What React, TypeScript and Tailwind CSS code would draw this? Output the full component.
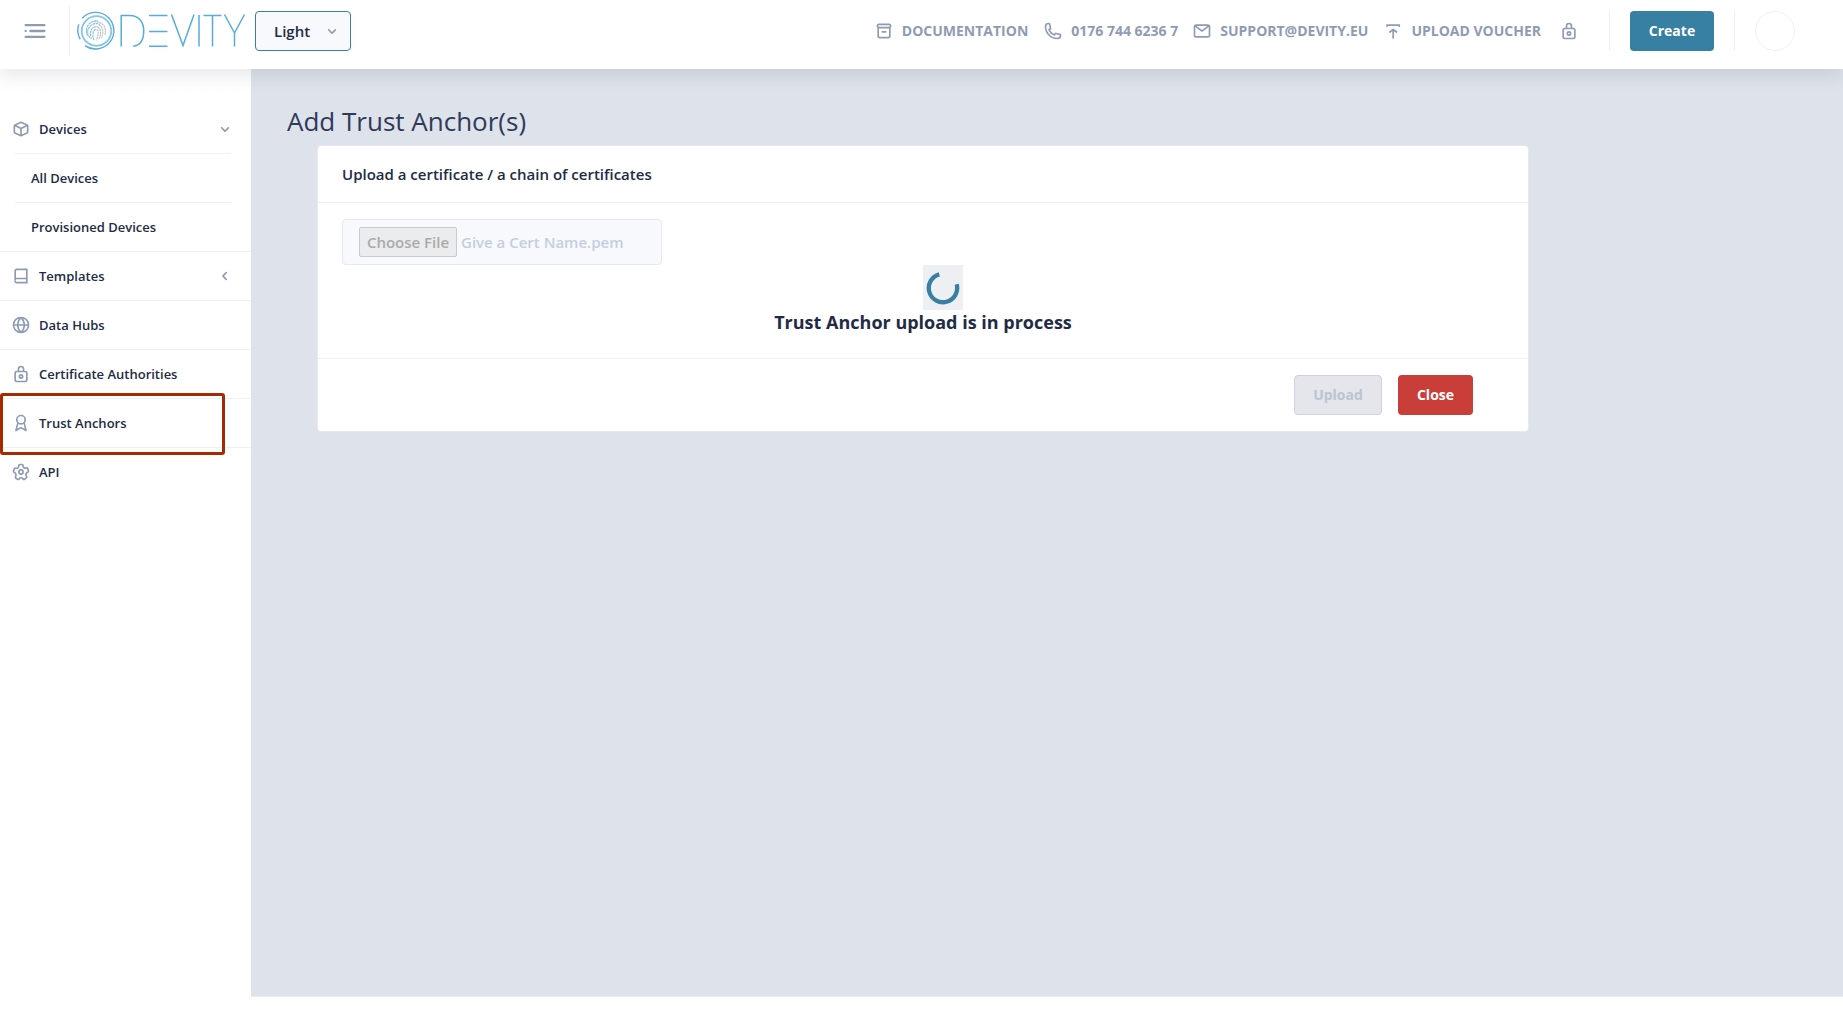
import React from "react";

type IconProps = { className?: string };

function Eva({ className = "", children }: IconProps & { children: React.ReactNode }) {
  return (
    <svg viewBox="0 0 24 24" fill="currentColor" className={`shrink-0 text-[#8f9bb3] ${className}`}>
      {children}
    </svg>
  );
}

const MenuIcon = ({ className }: IconProps) => (
  <Eva className={className}>
    <circle cx="4" cy="12" r="1" />
    <rect x="7" y="11" width="14" height="2" rx=".94" />
    <rect x="3" y="16" width="18" height="2" rx=".94" />
    <rect x="3" y="6" width="18" height="2" rx=".94" />
  </Eva>
);

const ArchiveIcon = ({ className }: IconProps) => (
  <Eva className={className}>
    <path d="M21 6a3 3 0 0 0-3-3H6a3 3 0 0 0-2 5.22V18a3 3 0 0 0 3 3h10a3 3 0 0 0 3-3V8.22A3 3 0 0 0 21 6zM6 5h12a1 1 0 0 1 0 2H6a1 1 0 0 1 0-2zm12 13a1 1 0 0 1-1 1H7a1 1 0 0 1-1-1V9h12z" />
    <rect x="9" y="12" width="6" height="2" rx=".87" />
  </Eva>
);

const PhoneIcon = ({ className }: IconProps) => (
  <Eva className={className}>
    <path d="M17.4 22A15.42 15.42 0 0 1 2 6.6 4.6 4.6 0 0 1 6.6 2a3.94 3.94 0 0 1 .77.07 3.79 3.79 0 0 1 .72.18 1 1 0 0 1 .65.75l1.37 6a1 1 0 0 1-.26.92c-.13.14-.14.15-1.37.79a9.91 9.91 0 0 0 4.87 4.89c.65-1.24.66-1.25.8-1.38a1 1 0 0 1 .92-.26l6 1.37a1 1 0 0 1 .72.65 4.34 4.34 0 0 1 .19.73 4.77 4.77 0 0 1 .06.76A4.6 4.6 0 0 1 17.4 22zM6.6 4A2.61 2.61 0 0 0 4 6.6 13.41 13.41 0 0 0 17.4 20a2.61 2.61 0 0 0 2.6-2.6v-.33L15.36 16l-.29.55c-.45.87-.78 1.5-1.62 1.16a11.85 11.85 0 0 1-7.18-7.21c-.36-.78.32-1.14 1.18-1.59L8 8.64 6.93 4z" />
  </Eva>
);

const EmailIcon = ({ className }: IconProps) => (
  <Eva className={className}>
    <path d="M19 4H5a3 3 0 0 0-3 3v10a3 3 0 0 0 3 3h14a3 3 0 0 0 3-3V7a3 3 0 0 0-3-3zm-.67 2L12 10.75 5.67 6zM19 18H5a1 1 0 0 1-1-1V7.25l7.4 5.55a1 1 0 0 0 .6.2 1 1 0 0 0 .6-.2L20 7.25V17a1 1 0 0 1-1 1z" />
  </Eva>
);

const UploadIcon = ({ className }: IconProps) => (
  <Eva className={className}>
    <path
      d="M4.800 6.200V5h14.800v1.200M12.200 20.500V11M8.200 13.200l4-3 4 3"
      fill="none"
      stroke="currentColor"
      strokeWidth="2"
      strokeLinecap="round"
      strokeLinejoin="round"
    />
  </Eva>
);

const LockIcon = ({ className }: IconProps) => (
  <Eva className={className}>
    <path d="M17 8h-1V6.11a4 4 0 1 0-8 0V8H7a3 3 0 0 0-3 3v8a3 3 0 0 0 3 3h10a3 3 0 0 0 3-3v-8a3 3 0 0 0-3-3zm-7-1.89A2.06 2.06 0 0 1 12 4a2.06 2.06 0 0 1 2 2.11V8h-4zM18 19a1 1 0 0 1-1 1H7a1 1 0 0 1-1-1v-8a1 1 0 0 1 1-1h10a1 1 0 0 1 1 1z" />
    <path d="M12 12a3 3 0 1 0 3 3 3 3 0 0 0-3-3zm0 4a1 1 0 1 1 1-1 1 1 0 0 1-1 1z" />
  </Eva>
);

const CubeIcon = ({ className }: IconProps) => (
  <Eva className={className}>
    <path d="M20.66 7.26c0-.07-.1-.14-.15-.21l-.09-.1a2.5 2.5 0 0 0-.86-.68l-6.4-3a2.7 2.7 0 0 0-2.26 0l-6.4 3a2.6 2.6 0 0 0-.86.68L3.52 7a1 1 0 0 0-.15.2A2.39 2.39 0 0 0 3 8.46v7.06a2.49 2.49 0 0 0 1.46 2.26l6.4 3a2.7 2.7 0 0 0 2.27 0l6.4-3A2.49 2.49 0 0 0 21 15.54V8.46a2.39 2.39 0 0 0-.34-1.2zm-8.95-2.2a.73.73 0 0 1 .58 0l5.33 2.48L12 10.15 6.38 7.54zM5.3 16a.47.47 0 0 1-.3-.43V9.1l6 2.79v6.72zm13.39 0L13 18.61v-6.72l6-2.79v6.44a.48.48 0 0 1-.31.46z" />
  </Eva>
);

const BookIcon = ({ className }: IconProps) => (
  <Eva className={className}>
    <path d="M19 3H7a3 3 0 0 0-3 3v12a3 3 0 0 0 3 3h12a1 1 0 0 0 1-1V4a1 1 0 0 0-1-1zM7 5h11v9H7a3 3 0 0 0-1 .18V6a1 1 0 0 1 1-1zm0 14a1 1 0 0 1 0-3h11v3z" />
  </Eva>
);

const GlobeIcon = ({ className }: IconProps) => (
  <Eva className={className}>
    <path d="M22 12A10 10 0 0 0 12 2a10 10 0 0 0 0 20 10 10 0 0 0 10-10zm-2.07-1H17a12.91 12.91 0 0 0-2.33-6.54A8 8 0 0 1 19.93 11zM9.08 13H15a11.44 11.44 0 0 1-3 6.61A11 11 0 0 1 9.08 13zm0-2A11.4 11.4 0 0 1 12 4.4a11.19 11.19 0 0 1 3 6.6zm.36-6.57A13.18 13.18 0 0 0 7.07 11h-3a8 8 0 0 1 5.37-6.57zM4.07 13h3a12.86 12.86 0 0 0 2.35 6.56A8 8 0 0 1 4.07 13zm10.55 6.55A13.14 13.14 0 0 0 17 13h2.95a8 8 0 0 1-5.33 6.55z" />
  </Eva>
);

const AwardIcon = ({ className }: IconProps) => (
  <Eva className={className}>
    <path d="M19 20.75l-2.31-9A5.94 5.94 0 0 0 18 8 6 6 0 0 0 6 8a5.94 5.94 0 0 0 1.34 3.77L5 20.75a1 1 0 0 0 1.48 1.11l5.33-3.13 5.68 3.14A.91.91 0 0 0 18 22a1 1 0 0 0 1-1.25zM12 4a4 4 0 1 1-4 4 4 4 0 0 1 4-4zm.31 12.71a1 1 0 0 0-1 0l-3.75 2.2 1.36-5.7a5.94 5.94 0 0 0 6.16 0l1.45 5.7z" />
  </Eva>
);

const SettingsIcon = ({ className }: IconProps) => (
  <Eva className={className}>
    <path
      d="M8.61 22a2.25 2.25 0 0 1-1.35-.46L5.19 20a2.37 2.37 0 0 1-.49-3.22 2.06 2.06 0 0 0 .23-1.86l-.06-.16a1.83 1.83 0 0 0-1.12-1.22h-.16a2.34 2.34 0 0 1-1.48-2.94L2.93 8a2.18 2.18 0 0 1 1.12-1.41 2.14 2.14 0 0 1 1.68-.12 1.93 1.93 0 0 0 1.78-.29l.13-.1a1.94 1.94 0 0 0 .73-1.51v-.24A2.32 2.32 0 0 1 10.66 2h2.55a2.26 2.26 0 0 1 1.6.67 2.37 2.37 0 0 1 .68 1.68v.28a1.76 1.76 0 0 0 .69 1.43l.11.08a1.74 1.74 0 0 0 1.59.26l.34-.11A2.26 2.26 0 0 1 21.1 7.8l.79 2.52a2.36 2.36 0 0 1-1.46 2.93l-.2.07A1.89 1.89 0 0 0 19 14.6a2 2 0 0 0 .25 1.65l.26.38a2.38 2.38 0 0 1-.5 3.23L17 21.41a2.24 2.24 0 0 1-3.22-.53l-.12-.17a1.75 1.75 0 0 0-1.5-.78 1.8 1.8 0 0 0-1.43.77l-.23.33A2.25 2.25 0 0 1 9 22a2 2 0 0 1-.39 0zM4.4 11.62a3.83 3.83 0 0 1 2.38 2.5v.12a4 4 0 0 1-.46 3.62.38.38 0 0 0 0 .51L8.47 20a.25.25 0 0 0 .37-.07l.23-.33a3.77 3.77 0 0 1 6.2 0l.12.18a.3.3 0 0 0 .18.12.25.25 0 0 0 .19-.05l2.06-1.56a.36.36 0 0 0 .07-.49l-.26-.38A4 4 0 0 1 17.1 14a3.92 3.92 0 0 1 2.49-2.61l.2-.07a.34.34 0 0 0 .19-.44l-.78-2.49a.35.35 0 0 0-.2-.19.21.21 0 0 0-.19 0l-.34.11a3.74 3.74 0 0 1-3.43-.57L15 7.65a3.76 3.76 0 0 1-1.49-3v-.31a.37.37 0 0 0-.1-.26.31.31 0 0 0-.21-.08h-2.54a.31.31 0 0 0-.29.33v.25a3.9 3.9 0 0 1-1.52 3.09l-.13.1a3.91 3.91 0 0 1-3.63.59.22.22 0 0 0-.14 0 .28.28 0 0 0-.12.15L4 11.12a.36.36 0 0 0 .22.45z"
      fillRule="evenodd"
    />
    <path d="M12 15.5a3.5 3.5 0 1 1 3.5-3.5 3.5 3.5 0 0 1-3.5 3.5zm0-5a1.5 1.5 0 1 0 1.5 1.5 1.5 1.5 0 0 0-1.5-1.5z" />
  </Eva>
);

const ChevronLeft = ({ className }: IconProps) => (
  <Eva className={className}>
    <path d="M13.36 17a1 1 0 0 1-.72-.31l-3.86-4a1 1 0 0 1 0-1.4l4-4a1 1 0 1 1 1.42 1.42L10.9 12l3.18 3.3a1 1 0 0 1 0 1.41 1 1 0 0 1-.72.29z" />
  </Eva>
);

const ChevronDown = ({ className }: IconProps) => (
  <Eva className={className}>
    <path d="M12 15.5a1 1 0 0 1-.71-.29l-4-4a1 1 0 1 1 1.42-1.42L12 13.1l3.3-3.18a1 1 0 1 1 1.38 1.44l-4 3.86a1 1 0 0 1-.68.28z" />
  </Eva>
);

/* Fingerprint badge followed by the thin-stroke wordmark */
function Logo() {
  return (
    <svg width="170" height="40" viewBox="0 0 170 40" fill="none" stroke="#55acde" className="shrink-0" aria-label="Devity">
      <g strokeWidth="1.4">
        <path d="M6.200 7.200A18.300 18.300 0 1 1 9 34.600" />
        <path d="M2.800 13.400A18.500 18.500 0 0 0 4.200 28.400" />
        <circle cx="20.500" cy="20" r="14.800" strokeWidth="1.800" stroke="#86c4e8" />
      </g>
      <g transform="translate(1 0)" strokeWidth="1.100" stroke="#7fbfe6" strokeDasharray="2.600 .5">
        <path d="M11 25a10 10 0 0 1 1-12 9.600 9.600 0 0 1 9-3" />
        <path d="M12.800 26.500a8 8 0 0 1 .6-11.500 8 8 0 0 1 9.600-1.500" />
        <path d="M14.500 28a12 12 0 0 1-.5-8.500 5.800 5.800 0 0 1 7-3.500" />
        <path d="M17 29a12 12 0 0 1-.6-8.500 3.500 3.500 0 0 1 3-2" />
      </g>
      <g transform="translate(1 0)" strokeWidth="1.100" stroke="#b5bfc8" strokeDasharray="2.200 .5">
        <path d="M17 10.800a9.500 9.500 0 0 1 11 6.200 14 14 0 0 1 0 7" />
        <path d="M22 14a7.500 7.500 0 0 1 3.800 6 14 14 0 0 1-1.400 7" />
        <path d="M20.500 16.200a5 5 0 0 1 3 4.800 14 14 0 0 1-1.800 7.500" />
        <path d="M19.500 18.800c2.400.4 2 3 1.400 5.400l-1.300 5.200" />
      </g>
      <g strokeWidth="1.500">
        <path d="M45.200 35.500V4.500h8.500c9.500 0 14 7 14 15.500s-3.500 14.500-10.500 15.200" />
        <path d="M73 4.500h18.500M73 20.500h18.500M73 35.300h18.500" />
        <path d="M95.500 3.500 107 34.500 118 3.500" />
        <path d="M123 4v31.500" />
        <path d="M127.500 4.500h18M136.500 4.500v31" />
        <path d="M148.500 3.500l10 18.500 10-18.500M158.500 22v13.500" />
      </g>
    </svg>
  );
}

const links = [
  { Icon: ArchiveIcon, label: "DOCUMENTATION", gap: "mr-[15px]" },
  { Icon: PhoneIcon, label: "0176 744 6236 7", gap: "mr-[14px]" },
  { Icon: EmailIcon, label: "SUPPORT@DEVITY.EU", gap: "mr-[15px]" },
  { Icon: UploadIcon, label: "UPLOAD VOUCHER", gap: "mr-[18px]" },
];

function Header() {
  return (
    <header className="relative z-10 flex h-[69px] items-center bg-white pb-[7px] shadow-[0_8px_16px_0_rgba(44,51,73,0.1)]">
      <MenuIcon className="ml-[21px] size-7" />
      <div className="ml-5 h-[50px] w-px bg-[#edf1f7]" />
      <div className="ml-[6px] flex items-center">
        <Logo />
      </div>
      <button className="ml-[9px] flex h-10 w-24 items-center justify-between rounded border border-[#3780a3] bg-[#f7f9fc] pr-2 pl-[18px] text-[15px] font-semibold text-[#222b45]">
        Light
        <ChevronDown className="size-5" />
      </button>

      <nav className="ml-auto flex items-center text-[14px] font-bold text-[#8f9bb3]">
        {links.map(({ Icon, label, gap }) => (
          <a key={label} className={`flex items-center gap-2 whitespace-nowrap ${gap}`}>
            <Icon className="size-5" />
            <span className="pb-0.5">{label}</span>
          </a>
        ))}
        <LockIcon className="size-5" />
      </nav>
      <div className="ml-[30px] h-10 w-px bg-[#edf1f7]" />
      <button className="ml-5 h-10 w-[84px] rounded bg-[#3780a3] pb-px text-[14px] font-bold text-white">Create</button>
      <div className="ml-5 h-10 w-px bg-[#edf1f7]" />
      <div className="mr-12 ml-5 size-10 rounded-full border border-[#edf1f7]" />
    </header>
  );
}

const rowText = "text-[13px] leading-6 font-semibold text-[#222b45]";

function MenuItem({ Icon, label, arrow }: { Icon: React.FC<IconProps>; label: string; arrow?: React.ReactNode }) {
  return (
    <a className={`flex h-12 items-center pr-4 pl-[11px] ${rowText}`}>
      <Icon className="mr-2 size-5" />
      <span className="grow">{label}</span>
      {arrow}
    </a>
  );
}

function Sidebar() {
  return (
    <aside className="w-[251px] shrink-0 bg-white pt-9">
      <ul>
        <li className="border-b border-[#edf1f7]">
          <MenuItem Icon={CubeIcon} label="Devices" arrow={<ChevronDown className="size-5" />} />
          <ul className="mr-5 ml-[15px]">
            <li className={`border-t border-[#edf1f7] py-3 pl-4 ${rowText}`}>All Devices</li>
            <li className={`border-t border-[#edf1f7] py-3 pl-4 ${rowText}`}>Provisioned Devices</li>
          </ul>
        </li>
        <li className="border-b border-[#edf1f7]">
          <MenuItem Icon={BookIcon} label="Templates" arrow={<ChevronLeft className="size-5" />} />
        </li>
        <li className="border-b border-[#edf1f7]">
          <MenuItem Icon={GlobeIcon} label="Data Hubs" />
        </li>
        <li className="border-b border-[#edf1f7]">
          <MenuItem Icon={LockIcon} label="Certificate Authorities" />
        </li>
        <li className="relative border-b border-[#edf1f7]">
          <MenuItem Icon={AwardIcon} label="Trust Anchors" />
          <div className="absolute -top-[6px] left-0 h-[62px] w-[225px] rounded-[3px] border-3 border-[#a52a00]" />
        </li>
        <li>
          <MenuItem Icon={SettingsIcon} label="API" />
        </li>
      </ul>
    </aside>
  );
}

function UploadCard() {
  return (
    <section className="ml-[30px] w-[1212px] rounded border border-[#e4e9f2] bg-white text-[#222b45]">
      <header className="flex h-[57px] items-center border-b border-[#edf1f7] px-6 text-[15px] font-semibold">
        Upload a certificate / a chain of certificates
      </header>
      <div className="h-[155px] px-6 pt-4">
        <div className="flex h-[46px] w-80 items-center gap-1 rounded border border-[#e4e9f2] bg-[#f7f9fc] px-4 text-[15px] font-semibold text-[#c5cee0]">
          <span className="flex h-[30px] w-[98px] items-center justify-center rounded-[2px] border border-[#c8cbd0] bg-[#ebeced] text-[#aaaaaa]">
            Choose File
          </span>
          Give a Cert Name.pem
        </div>
        <div className="flex justify-center pl-10">
          <div className="flex h-[45px] w-10 items-center justify-center bg-[#edeff3]">
            <svg width="34" height="34" viewBox="0 0 34 34" fill="none" stroke="#3780a3" strokeWidth="4.300">
              <path d="M30.700 13.300A14.200 14.200 0 1 1 13.300 3.300" />
            </svg>
          </div>
        </div>
        <p className="text-center text-[18px] leading-6 font-bold">Trust Anchor upload is in process</p>
      </div>
      <footer className="flex h-[73px] items-center justify-end gap-4 border-t border-[#edf1f7] pr-[55px] text-[14px] font-bold">
        <button className="h-10 w-[88px] rounded border border-[#d0d3dd] bg-[#e4e6eb] pb-0.5 text-[#bcc3d3]">Upload</button>
        <button className="h-10 w-[75px] rounded bg-[#c93e38] pb-0.5 text-white">Close</button>
      </footer>
    </section>
  );
}

export default function App() {
  return (
    <div className="flex h-[1011px] flex-col bg-white font-['Open_Sans',sans-serif]">
      <Header />
      <div className="flex h-[928px]">
        <Sidebar />
        <main className="grow border-b border-[#e9edf3] bg-[#dee2ea] pt-9 pl-9">
          <h1 className="h-[40px] text-[26px] leading-8 text-[#2e3a59]">Add Trust Anchor(s)</h1>
          <UploadCard />
        </main>
      </div>
    </div>
  );
}
